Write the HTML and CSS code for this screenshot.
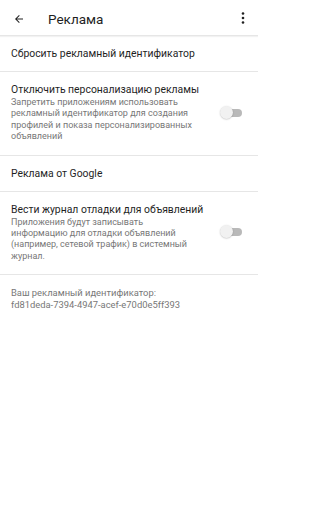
FILE: index.html
```html
<!DOCTYPE html>
<html lang="ru">
<head>
<meta charset="utf-8">
<link rel="stylesheet" href="styles.css">
</head>
<body>
<header class="toolbar">
  <svg class="back" width="12" height="12" viewBox="0 0 24 24"><path d="M20 11H7.83l5.59-5.59L12 4l-8 8 8 8 1.41-1.41L7.83 13H20v-2z" fill="#212121"/></svg>
  <div class="title">Реклама</div>
  <svg class="more" width="4" height="12" viewBox="0 0 4 12"><circle cx="2" cy="1.5" r="1.3" fill="#212121"/><circle cx="2" cy="6" r="1.3" fill="#212121"/><circle cx="2" cy="10.5" r="1.3" fill="#212121"/></svg>
</header>
<main class="list">
  <div class="item single">Сбросить рекламный идентификатор</div>
  <div class="item">
    <div class="texts">
      <div class="primary">Отключить персонализацию рекламы</div>
      <div class="secondary">Запретить приложениям использовать<br>рекламный идентификатор для создания<br>профилей и показа персонализированных<br>объявлений</div>
    </div>
    <div class="switch"><span class="track"></span><span class="thumb"></span></div>
  </div>
  <div class="item single">Реклама от Google</div>
  <div class="item">
    <div class="texts">
      <div class="primary">Вести журнал отладки для объявлений</div>
      <div class="secondary">Приложения будут записывать<br>информацию для отладки объявлений<br>(например, сетевой трафик) в системный<br>журнал.</div>
    </div>
    <div class="switch"><span class="track"></span><span class="thumb"></span></div>
  </div>
  <div class="footer">Ваш рекламный идентификатор:<br>fd81deda-7394-4947-acef-e70d0e5ff393</div>
</main>
</body>
</html>
```
FILE: styles.css
```css
html, body { margin: 0; padding: 0; background: #fff; }
body { font-family: Roboto, "Noto Sans", sans-serif; color: #1f1f1f; width: 258px; }
.toolbar {
  height: 36px; display: flex; align-items: center; box-sizing: border-box;
  border-bottom: 1px solid #e6e6e6; box-shadow: 0 1px 1px rgba(0,0,0,0.05);
  padding: 0 0 0 13px;
}
.back { flex: none; margin-top: 2px; }
.title { font-size: 13.5px; margin-left: 23px; flex: 1; margin-top: 2px; }
.more { flex: none; margin-right: 13px; margin-top: 1px; }
.list { display: flex; flex-direction: column; }
.item {
  display: flex; align-items: center; border-bottom: 1px solid #e6e6e6;
  padding: 11px 11px 12px; box-sizing: border-box;
}
.item.single { height: 36px; padding-top: 0; padding-bottom: 0; font-size: 10.4px; }
.texts { flex: 1; min-width: 0; }
.primary { font-size: 10.4px; line-height: 14px; }
.secondary { font-size: 9px; line-height: 11.4px; color: #777; white-space: nowrap; }
.switch { position: relative; width: 22px; height: 14px; flex: none; margin-right: 5px; }
.track { position: absolute; left: 3px; top: 3px; width: 19px; height: 8px; border-radius: 4px; background: #b9b9b9; }
.thumb { position: absolute; left: 0; top: 0; width: 13px; height: 13px; border-radius: 50%; background: #f1f1f1; box-shadow: 0 0.5px 1.5px rgba(0,0,0,0.25); }
.footer { font-size: 9.4px; line-height: 11.4px; color: #777; padding: 12px 11px; }
```
